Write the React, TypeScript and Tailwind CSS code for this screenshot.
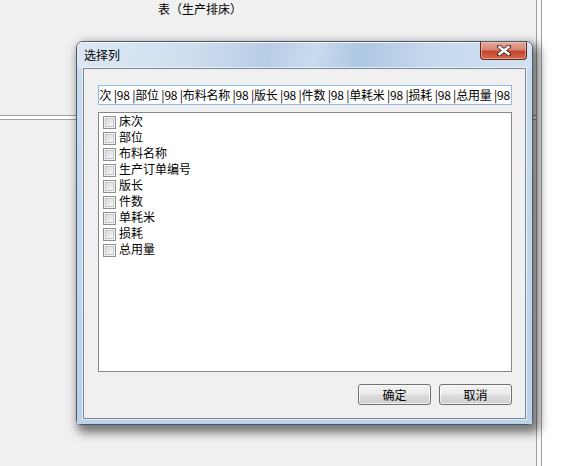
import React from 'react'

const FONT = { fontFamily: '"Noto Sans CJK SC", "Noto Sans", sans-serif' }

const COLUMNS = ['床次', '部位', '布料名称', '生产订单编号', '版长', '件数', '单耗米', '损耗', '总用量']
const INPUT_TEXT = '床次 |98 |部位 |98 |布料名称 |98 |版长 |98 |件数 |98 |单耗米 |98 |损耗 |98 |总用量 |98'

function CheckBox() {
  return (
    <div className="w-[13px] h-[13px] border border-[#8e8f8f] bg-[#f4f4f4] p-[1px] shrink-0">
      <div className="w-full h-full border border-[#c6c9ce] bg-[linear-gradient(135deg,#d6d8dc_0%,#eceded_60%,#f7f7f7_100%)]" />
    </div>
  )
}

function WinButton({ label }: { label: string }) {
  return (
    <div className="w-[73px] h-[21px] rounded-[3px] border border-[#707070] bg-[linear-gradient(#f2f2f2_0%,#ebebeb_48%,#dddddd_52%,#cfcfcf_100%)] flex items-center justify-center text-[12px] text-black shadow-[inset_0_0_0_1px_rgba(255,255,255,0.7)]">
      {label}
    </div>
  )
}

function CloseButton() {
  return (
    <div className="w-[47px] h-[18px] rounded-b-[4px] border border-t-0 border-[#5c2a22] bg-[linear-gradient(#e6a99c_0%,#d88672_45%,#c3452c_55%,#d46a50_100%)] flex items-center justify-center shadow-[inset_0_0_0_1px_rgba(255,220,210,0.45)]">
      <svg width="14" height="11" viewBox="0 0 14 11">
        <path d="M2 1.5 L12 9.5 M12 1.5 L2 9.5" stroke="#4a2a26" strokeWidth="4.2" strokeLinecap="square" />
        <path d="M2.5 2 L11.5 9 M11.5 2 L2.5 9" stroke="#ffffff" strokeWidth="2.4" strokeLinecap="square" />
      </svg>
    </div>
  )
}

export default function App() {
  return (
    <div className="w-[578px] h-[466px] bg-[#f0f0f0] relative overflow-hidden flex text-[12px] text-black" style={FONT}>
      {/* background window behind the dialog */}
      <div className="w-[536px] h-full flex flex-col">
        <div className="pl-[158px] pt-[1px] h-[18px] leading-[16px]">表（生产排床）</div>
        <div className="mt-[97px] h-[5px] border-y border-[#a0a0a0] bg-white" />
      </div>
      <div className="w-px h-full bg-[#a0a0a0]" />
      <div className="w-[4px] h-full bg-[#f7f7f7]" />
      <div className="w-px h-full bg-[#a0a0a0]" />
      <div className="flex-1 h-full bg-white" />

      {/* dialog window */}
      <div className="absolute left-[76px] top-[41px] w-[457px] h-[384px] rounded-t-[7px] rounded-b-[5px] border border-[#4d5766] bg-[#c2d6ec] shadow-[4px_5px_10px_3px_rgba(0,0,0,0.5)] flex flex-col">
        <div className="h-[26px] shrink-0 flex items-start justify-between rounded-t-[6px] bg-[linear-gradient(100deg,#dce7f3_0%,#cfdeef_25%,#b7cde6_42%,#c9dbef_52%,#aec7e3_62%,#c6d9ee_78%,#d3e2f2_100%)] shadow-[inset_0_1px_0_rgba(255,255,255,0.8)]">
          <span className="pl-[7px] pt-[6px] leading-[14px] text-[12px] text-black">选择列</span>
          <div className="mr-[5px]">
            <CloseButton />
          </div>
        </div>
        <div className="flex-1 px-[6px] pb-[5px] bg-[linear-gradient(#c9dbef,#bcd2ea)]">
          <div className="h-full border border-[#7b8795] bg-[#f0f0f0] shadow-[0_0_0_1px_rgba(255,255,255,0.6)] pl-[14px] pr-[13px] pt-[16px] pb-[13px] flex flex-col">
            <div className="h-[20px] border border-[#8fbbe6] bg-white flex justify-end items-center overflow-hidden pr-[1px]">
              <span className="whitespace-nowrap leading-[16px] tracking-[-0.2px]">{INPUT_TEXT}</span>
            </div>
            <div className="mt-[7px] h-[260px] border border-[#828790] bg-white pt-[1px] pl-[4px] flex flex-col">
              {COLUMNS.map(name => (
                <div key={name} className="h-[16px] flex items-center gap-[3px]">
                  <CheckBox />
                  <span className="leading-[16px] -mt-[2px]">{name}</span>
                </div>
              ))}
            </div>
            <div className="mt-[12px] flex justify-end gap-[8px]">
              <WinButton label="确定" />
              <WinButton label="取消" />
            </div>
          </div>
        </div>
      </div>
    </div>
  )
}
